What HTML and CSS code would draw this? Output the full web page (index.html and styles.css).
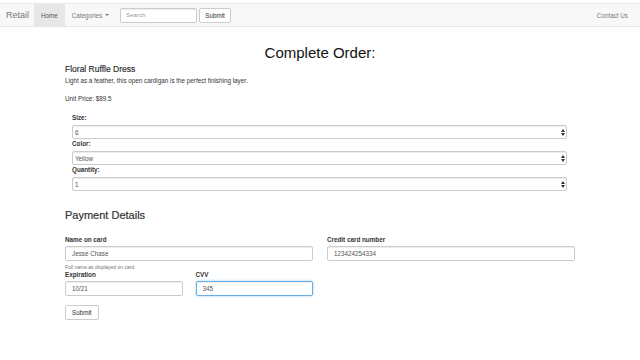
FILE: index.html
```html
<!DOCTYPE html>
<html lang="en">
<head>
  <meta charset="UTF-8">
  <meta name="viewport" content="width=device-width, initial-scale=1.0">
  <title>Complete Order</title>
  <link rel="stylesheet" href="styles.css">
</head>
<body>
  <div class="navbar">
    <a class="navbar-brand" href="#">Retail</a>
    <a class="nav-link active" href="#">Home</a>
    <a class="nav-link" href="#">Categories <span class="caret"></span></a>
    <form class="navbar-form">
      <input class="nav-input" type="text" placeholder="Search">
      <button class="btn" type="button">Submit</button>
    </form>
    <a class="nav-link nav-right" href="#">Contact Us</a>
  </div>

  <div class="container">
    <h1>Complete Order:</h1>
    <h4>Floral Ruffle Dress</h4>
    <p class="desc">Light as a feather, this open cardigan is the perfect finishing layer.</p>
    <p class="price">Unit Price: $89.5</p>

    <div class="options">
      <label>Size:</label>
      <div class="select-wrap">
        <div class="select-box">6</div>
        <svg class="arrows" width="4" height="7" viewBox="0 0 4 7"><path d="M0 3L2 0L4 3Z M0 4L2 7L4 4Z" fill="#333"/></svg>
      </div>
      <label>Color:</label>
      <div class="select-wrap">
        <div class="select-box">Yellow</div>
        <svg class="arrows" width="4" height="7" viewBox="0 0 4 7"><path d="M0 3L2 0L4 3Z M0 4L2 7L4 4Z" fill="#333"/></svg>
      </div>
      <label>Quantity:</label>
      <div class="select-wrap">
        <div class="select-box">1</div>
        <svg class="arrows" width="4" height="7" viewBox="0 0 4 7"><path d="M0 3L2 0L4 3Z M0 4L2 7L4 4Z" fill="#333"/></svg>
      </div>
    </div>

    <h3>Payment Details</h3>
    <div class="row">
      <div class="col">
        <label>Name on card</label>
        <input class="form-control" type="text" value="Jesse Chase">
        <small class="help">Full name as displayed on card</small>
        <div class="row small-row">
          <div class="col">
            <label>Expiration</label>
            <input class="form-control" type="text" value="10/21">
          </div>
          <div class="col">
            <label>CVV</label>
            <input class="form-control focus" type="text" value="345">
          </div>
        </div>
      </div>
      <div class="col">
        <label>Credit card number</label>
        <input class="form-control" type="text" value="123424254334">
      </div>
    </div>
    <button class="btn submit" type="button">Submit</button>
  </div>
</body>
</html>
```

FILE: styles.css
```css
body {
  font-family: "Liberation Sans", Arial, sans-serif;
  font-size: 7px;
  color: #333;
  margin: 0;
  padding: 0;
  background-color: #fff;
}
.navbar {
  display: flex;
  align-items: stretch;
  height: 24px;
  margin-top: 3px;
  box-sizing: border-box;
  background-color: #f8f8f8;
  border-top: 1px solid #e7e7e7;
  border-bottom: 1px solid #e7e7e7;
  padding: 0 5px 0 6px;
}
.navbar a {
  text-decoration: none;
  display: flex;
  align-items: center;
}
.navbar-brand {
  font-size: 9px;
  color: #777;
  padding-right: 5px;
}
.nav-link {
  color: #777;
  font-size: 6.3px;
  padding: 0 7px;
}
.nav-link.active {
  background-color: #e7e7e7;
  color: #555;
}
.caret {
  display: inline-block;
  width: 0;
  height: 0;
  margin-left: 3px;
  border-top: 2px solid #777;
  border-left: 2px solid transparent;
  border-right: 2px solid transparent;
}
.navbar-form {
  display: flex;
  align-items: center;
  gap: 2px;
  margin-left: 4px;
}
.nav-input {
  width: 77px;
  height: 15px;
  box-sizing: border-box;
  border: 1px solid #ccc;
  border-radius: 2px;
  padding: 0 5px;
  font-family: inherit;
  font-size: 6px;
  box-shadow: inset 0 1px 1px rgba(0, 0, 0, 0.075);
}
.nav-input::placeholder {
  color: #999;
}
.btn {
  height: 15px;
  box-sizing: border-box;
  background-color: #fff;
  border: 1px solid #ccc;
  border-radius: 2px;
  padding: 0 5px;
  font-family: inherit;
  font-size: 6.3px;
  color: #333;
}
.nav-right {
  margin-left: auto;
}
.container {
  width: 510px;
  margin: 0 auto;
}
h1 {
  text-align: center;
  font-size: 15px;
  font-weight: normal;
  margin: 17px 0 0;
  line-height: 18px;
  color: #111;
}
h4 {
  font-size: 8.5px;
  font-weight: normal;
  -webkit-text-stroke: 0.2px #333;
  margin: 1px 0 0;
  line-height: 12px;
}
.desc {
  font-size: 6.3px;
  margin: 0;
  line-height: 12px;
}
.price {
  font-size: 6.3px;
  margin: 6px 0 0;
  line-height: 12px;
}
.options {
  padding: 9px 8px 0 7px;
}
label {
  display: block;
  font-weight: bold;
  font-size: 6.3px;
  line-height: 8px;
  margin-bottom: 3px;
}
.select-wrap {
  position: relative;
  margin-bottom: 1px;
}
.select-box {
  height: 14px;
  box-sizing: border-box;
  border: 1px solid #ccc;
  border-radius: 2px;
  background-color: #fff;
  padding: 0 2px;
  display: flex;
  align-items: center;
  font-size: 6.3px;
  color: #555;
  box-shadow: inset 0 1px 1px rgba(0, 0, 0, 0.075);
}
.arrows {
  position: absolute;
  right: 2px;
  top: 4px;
}
h3 {
  font-size: 11px;
  font-weight: normal;
  -webkit-text-stroke: 0.2px #333;
  margin: 17px 0 0;
  line-height: 14px;
}
.row {
  display: flex;
  gap: 14px;
  margin-top: 14px;
}
.col {
  flex: 1;
}
.small-row {
  margin-top: 0;
  gap: 13px;
}
.row label {
  margin-bottom: 2px;
}
.form-control {
  display: block;
  width: 100%;
  height: 15px;
  box-sizing: border-box;
  border: 1px solid #ccc;
  border-radius: 2px;
  padding: 0 6px;
  font-family: inherit;
  font-size: 6.3px;
  color: #555;
  box-shadow: inset 0 1px 1px rgba(0, 0, 0, 0.075);
}
.form-control.focus {
  border-color: #66afe9;
  box-shadow: inset 0 1px 1px rgba(0, 0, 0, 0.075), 0 0 3px rgba(102, 175, 233, 0.6);
}
.help {
  display: block;
  font-size: 5px;
  color: #737373;
  line-height: 6px;
  margin: 3px 0 1px;
}
.submit {
  margin-top: 9px;
  height: 15px;
  padding: 0 6px;
}
```
